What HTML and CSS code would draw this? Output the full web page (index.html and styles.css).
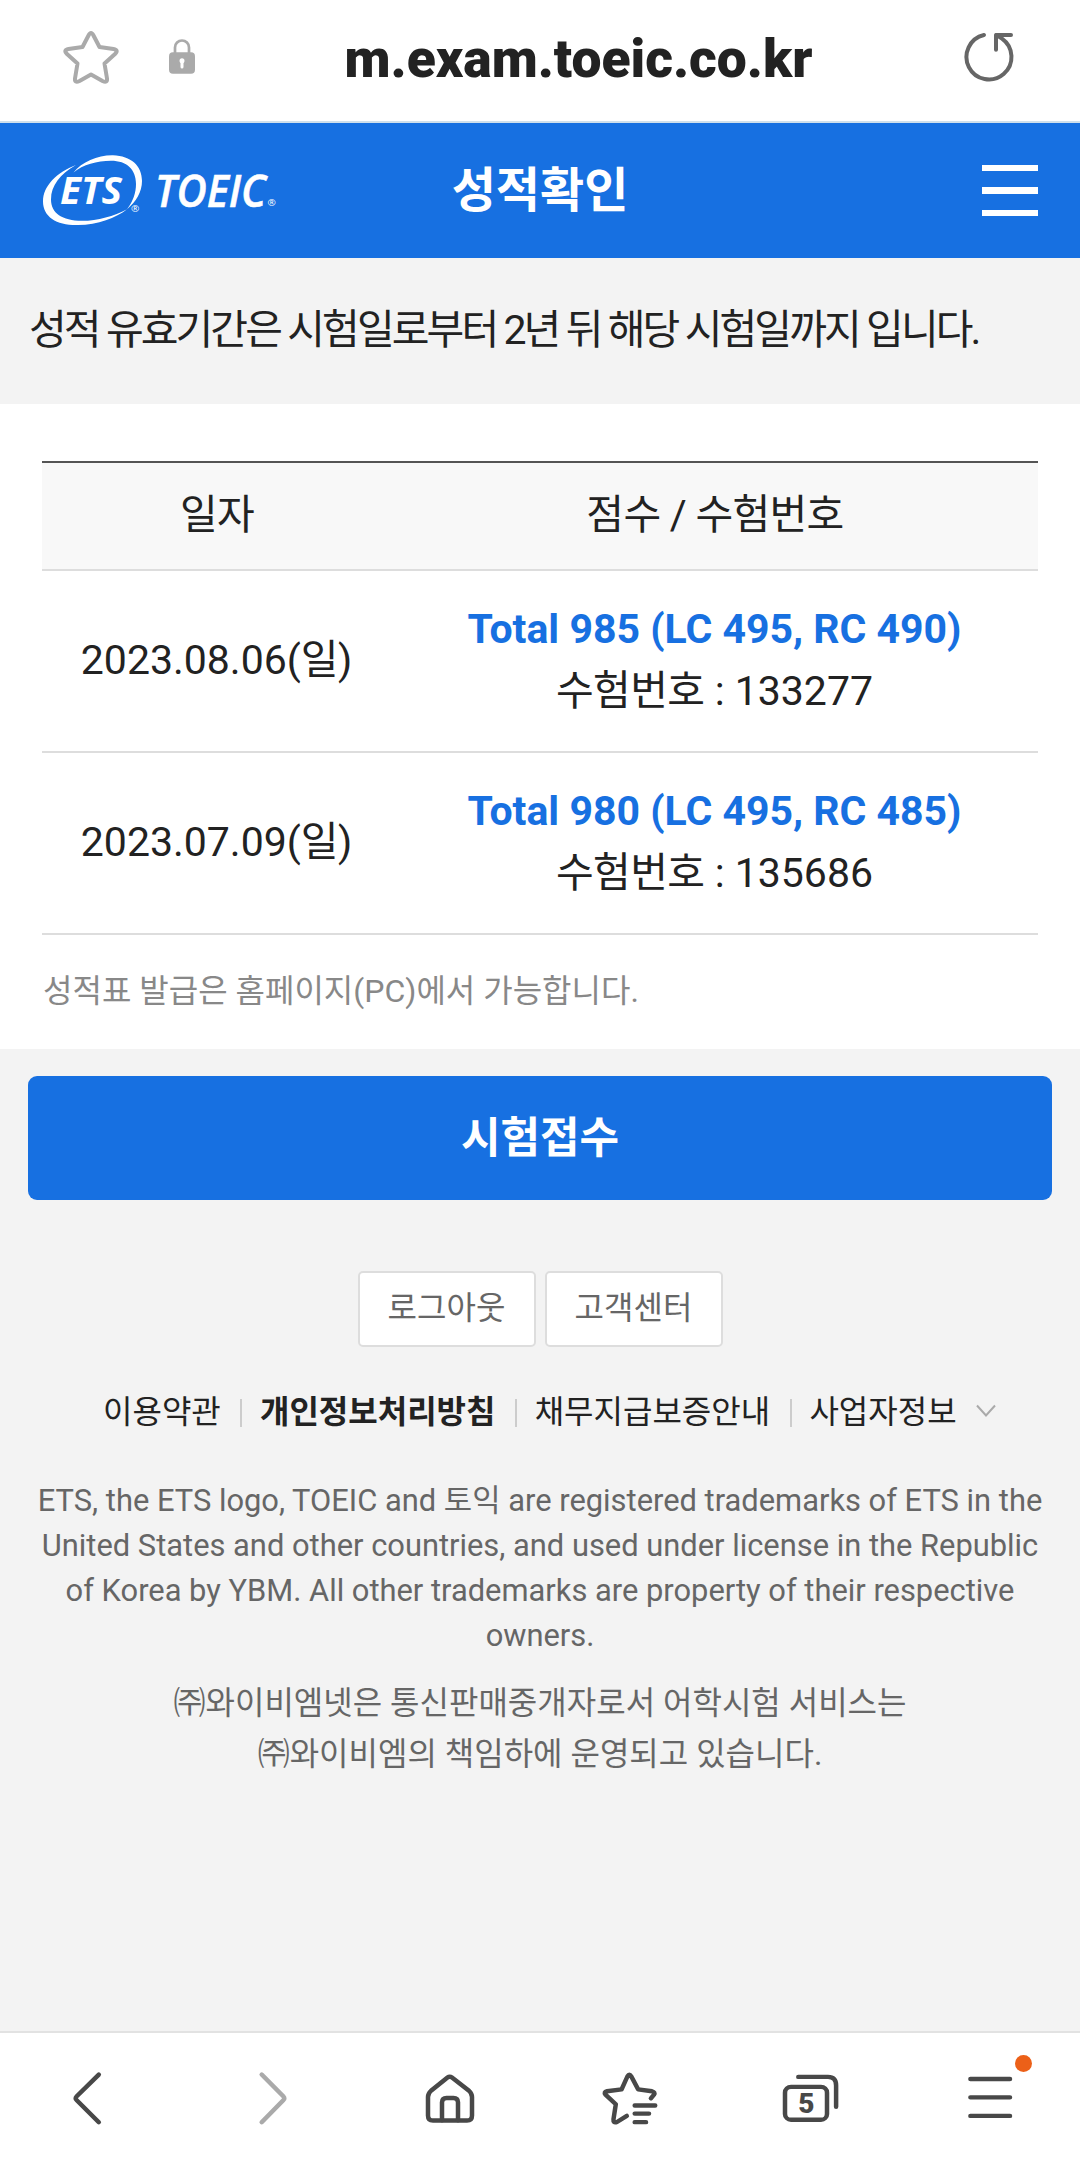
FILE: index.html
```html
<!DOCTYPE html>
<html lang="ko">
<head>
<meta charset="utf-8">
<title>성적확인</title>
<link rel="stylesheet" href="styles.css">
</head>
<body>

<!-- 주소창 -->
<div class="addressBar">
	<svg class="icoStar" width="56" height="56" viewBox="0 0 56 56">
		<path d="M25.500 6.500Q28 1.500 30.500 6.500L36.500 18L50.500 20Q56 21 52 25L41.500 34.500L44 49.500Q44.500 54.500 39.500 52L28 45.500L16.500 52Q11.500 54.500 12 49.500L14.500 34.500L4 25Q0 21 5.500 20L19.500 18Z"/>
	</svg>
	<svg class="icoLock" width="26" height="35" viewBox="0 0 26 35">
		<path class="shackle" d="M6 15V8.500a7 7 0 0 1 14 0v7"/>
		<rect class="body" x="0" y="13.300" width="26" height="21.500" rx="4"/>
		<path class="hole" d="M13 22v6"/>
		<circle class="hole" cx="13" cy="21.800" r="1"/>
	</svg>
	<div class="url">m.exam.toeic.co.kr</div>
	<svg class="icoReload" width="52" height="54" viewBox="0 0 52 54">
		<path d="M22 5A22.500 22.500 0 1 0 40 8.600L34.500 5"/>
		<path d="M34 19.800V5H49"/>
	</svg>
</div>

<div class="header">
	<svg class="logo" width="236" height="73.500" viewBox="42 160 236 76" preserveAspectRatio="none">
		<path d="M73.500 179C82 168 98 161 113 161.300C131 162 142 172 142 188C142 199 136 210 127 217C133 209 136 200 136 191C136 176 127 167 111 167C97 167 83 171 73.500 179Z"/>
		<path d="M76 171.500C57 179 43 193 43 209C43 225 57 234 78 233.500C98 233 116 226 127 217C114 224 98 229 82 229C62 229 51 221 51 207C51 193 60 181 76 171.500Z"/>
		<text class="logoEts" x="60" y="211.500" textLength="62" lengthAdjust="spacingAndGlyphs">ETS</text>
		<text class="logoToeic" x="155" y="214.500" textLength="111" lengthAdjust="spacingAndGlyphs">TOEIC</text>
		<text class="logoReg" x="131" y="220">®</text>
		<text class="logoReg" x="267.500" y="214">®</text>
	</svg>
	<h1 class="title">성적확인</h1>
	<div class="btMenu"><span></span><span></span><span></span></div>
</div>

<div class="notice">성적 유효기간은 시험일로부터 2년 뒤 해당 시험일까지 입니다.</div>

<div class="scoreBox">
	<table class="scoreTable">
		<tr>
			<th class="colDate">일자</th>
			<th>점수 / 수험번호</th>
		</tr>
		<tr>
			<td>2023.08.06(<span class="ko">일</span>)</td>
			<td><b class="total">Total 985 (LC 495, RC 490)</b><br><span class="ko">수험번호</span> : 133277</td>
		</tr>
		<tr>
			<td>2023.07.09(<span class="ko">일</span>)</td>
			<td><b class="total">Total 980 (LC 495, RC 485)</b><br><span class="ko">수험번호</span> : 135686</td>
		</tr>
	</table>
	<p class="guide">성적표 발급은 홈페이지(PC)에서 가능합니다.</p>
</div>

<div class="btApply">시험접수</div>

<div class="footer">
	<div class="footBtns">
		<span class="btSmall">로그아웃</span>
		<span class="btSmall">고객센터</span>
	</div>
	<div class="footLinks">
		<span>이용약관</span><i></i>
		<b>개인정보처리방침</b><i></i>
		<span>채무지급보증안내</span><i></i>
		<span>사업자정보</span>
		<svg class="icoDown" width="20" height="14" viewBox="0 0 20 14"><path d="M1 1.500L10 11.500L19 1.500"/></svg>
	</div>
	<p class="copyEn">ETS, the ETS logo, TOEIC and 토익 are registered trademarks of ETS in the United States and other countries, and used under license in the Republic of Korea by YBM. All other trademarks are property of their respective owners.</p>
	<p class="copyKo">㈜와이비엠넷은 통신판매중개자로서 어학시험 서비스는<br>㈜와이비엠의 책임하에 운영되고 있습니다.</p>
</div>

<!-- 하단 브라우저 툴바 -->
<div class="toolBar">
	<div class="tool">
		<svg width="60" height="58" viewBox="0 0 60 60" preserveAspectRatio="none"><path d="M38.800 5.800L16.500 28.500Q15 30.300 16.500 32L38.800 55"/></svg>
	</div>
	<div class="tool disabled">
		<svg width="60" height="58" viewBox="0 0 60 60" preserveAspectRatio="none"><path d="M21.700 5.800L43.500 28.500Q45 30.300 43.500 32L21.700 55"/></svg>
	</div>
	<div class="tool">
		<svg width="60" height="58" viewBox="0 0 60 60" preserveAspectRatio="none">
			<path d="M27.500 8.800Q29.700 7 32 8.800L49 22.500Q52 25.300 52 29V48Q52 53.300 47 53.300H13Q8 53.300 8 48V29Q8 25.300 11 22.500Z"/>
			<path d="M22 53V34.500Q22 30 26.500 30H33.500Q38 30 38 34.500V53"/>
		</svg>
	</div>
	<div class="tool">
		<svg width="60" height="58" viewBox="0 0 60 60" preserveAspectRatio="none">
			<path d="M26.800 48.500L17 54.800Q13 56.500 13.500 52L15.800 36.500L5.500 26.500Q3.500 23.800 7 23L21.600 21L27.500 7.500Q29.300 4 31.200 7.500L38.100 21L52 23Q55.500 24 54 26.500L50.900 30.300"/>
			<path d="M34.700 37.800H55.200M34.700 46.100H49M34.700 55H46"/>
		</svg>
	</div>
	<div class="tool">
		<svg width="60" height="58" viewBox="0 0 60 60" preserveAspectRatio="none">
			<rect x="5" y="18.500" width="42" height="34" rx="6"/>
			<path d="M18.300 8.200H48Q56.100 8.200 56.100 17V39"/>
			<text class="tabCount" x="26.300" y="45.700">5</text>
		</svg>
	</div>
	<div class="tool">
		<svg width="60" height="58" viewBox="0 0 60 60" preserveAspectRatio="none"><path d="M10.400 10.300H50M10.400 29.300H50M10.400 48.500H50"/></svg>
		<span class="dot"></span>
	</div>
</div>

</body>
</html>
```

FILE: styles.css
```css
*{
	box-sizing:border-box;
}
body{
	margin:0;
	height:2160px;
	display:flex;
	flex-direction:column;
	background:#f3f3f3;
	color:#222;
	font-family:Roboto,"Noto Sans CJK KR",sans-serif;
	font-size:41px;
	line-height:61.500px;
}
h1,p{
	margin:0;
}
svg{
	display:block;
	flex:none;
	overflow:visible;
}

/* 주소창 */
.addressBar{
	height:123px;
	padding:0 66px 8px 63px;
	display:flex;
	align-items:center;
	background:#fff;
	border-bottom:2px solid #cfe0ec;
}
.icoStar{
	fill:none;
	stroke:#aaa;
	stroke-width:4;
	stroke-linejoin:round;
}
.icoLock{
	margin-left:50px;
}
.icoLock .shackle{
	fill:none;
	stroke:#aaa;
	stroke-width:2.700px;
}
.icoLock .body{
	fill:#aaa;
}
.icoLock .hole{
	fill:#fff;
	stroke:#fff;
	stroke-width:3;
	stroke-linecap:round;
}
.url{
	flex:1;
	padding-top:4px;
	text-align:center;
	font-size:53.400px;
	font-weight:900;
	white-space:nowrap;
}
.icoReload{
	fill:none;
	stroke:#666;
	stroke-width:4;
	stroke-linecap:round;
	stroke-linejoin:round;
}

.header{
	height:135px;
	padding:0 42px;
	display:grid;
	grid-template-columns:236px 1fr 236px;
	align-items:center;
	background:#1770e1;
	color:#fff;
}
.logo{
	fill:#fff;
	font-family:"Open Sans",sans-serif;
	font-style:italic;
}
.logoEts{
	font-size:39px;
	font-weight:bold;
}
.logoToeic{
	font-size:46px;
	font-weight:600;
	stroke:#fff;
	stroke-width:.6px;
}
.logoReg{
	font-size:10px;
	font-style:normal;
}
.title{
	text-align:center;
	font-size:48px;
	font-weight:bold;
}
.btMenu{
	justify-self:end;
	width:56px;
	display:grid;
	gap:16px;
}
.btMenu span{
	height:6.500px;
	background:#fff;
}

.notice{
	height:146px;
	padding:42px 29px 0;
	letter-spacing:-2.900px;
	white-space:nowrap;
}

/* 성적표 */
.scoreBox{
	height:645px;
	padding:57px 42px 0;
	background:#fff;
}
.scoreTable{
	width:100%;
	table-layout:fixed;
	border-spacing:0;
	border-top:2px solid #555;
	text-align:center;
}
.scoreTable th{
	height:108px;
	padding:0 2px 0 0;
	background:#f8f8f8;
	border-bottom:2px solid #ddd;
	font-weight:normal;
	letter-spacing:-0.700px;
}
.scoreTable .colDate{
	width:352px;
}
.scoreTable td{
	height:182px;
	padding:0 3px 1px 0;
	border-bottom:2px solid #ddd;
}
.total{
	color:#1770e1;
}
.ko{
	letter-spacing:-0.600px;
}
.guide{
	padding:33px 0 0 1px;
	font-size:32px;
	line-height:46px;
	color:#888;
}

.btApply{
	height:124px;
	margin:27px 28px 0;
	border-radius:9px;
	background:#1770e1;
	color:#fff;
	text-align:center;
	font-size:43px;
	font-weight:bold;
	line-height:124px;
}

/* 푸터 */
.footer{
	flex:1;
	padding-top:71px;
	text-align:center;
	font-size:32px;
	color:#666;
}
.footBtns{
	display:flex;
	justify-content:center;
	gap:9px;
}
.btSmall{
	width:178px;
	height:76px;
	border:2px solid #ddd;
	border-radius:5px;
	background:#fff;
	line-height:71px;
}
.footLinks{
	height:46px;
	margin:43px 0 0 103px;
	display:flex;
	align-items:center;
	color:#222;
	white-space:nowrap;
}
.footLinks i{
	width:2px;
	height:28px;
	margin:0 17.500px 0 19.700px;
	background:#ccc;
}
.icoDown{
	margin:0 0 4px 19px;
	fill:none;
	stroke:#aaa;
	stroke-width:2;
}
.copyEn{
	padding:42px 30px 0;
	font-size:30.860px;
	line-height:45px;
}
.copyKo{
	padding-top:20px;
	font-size:32px;
	line-height:51px;
}

/* 하단 툴바 */
.toolBar{
	height:129px;
	padding-top:3px;
	display:grid;
	grid-template-columns:repeat(6,180px);
	align-items:center;
	justify-items:center;
	background:#fff;
	border-top:2px solid #e2e2e2;
}
.tool{
	position:relative;
}
.tool svg{
	fill:none;
	stroke:#484848;
	stroke-width:4.500px;
	stroke-linecap:round;
	stroke-linejoin:round;
}
.disabled svg{
	stroke:#aaa;
}
.tool .tabCount{
	fill:#484848;
	stroke:none;
	font-size:28px;
	font-weight:900;
	text-anchor:middle;
}
.dot{
	position:absolute;
	right:-12px;
	top:-14px;
	width:17px;
	height:17px;
	border-radius:50%;
	background:#ec6018;
}
```
